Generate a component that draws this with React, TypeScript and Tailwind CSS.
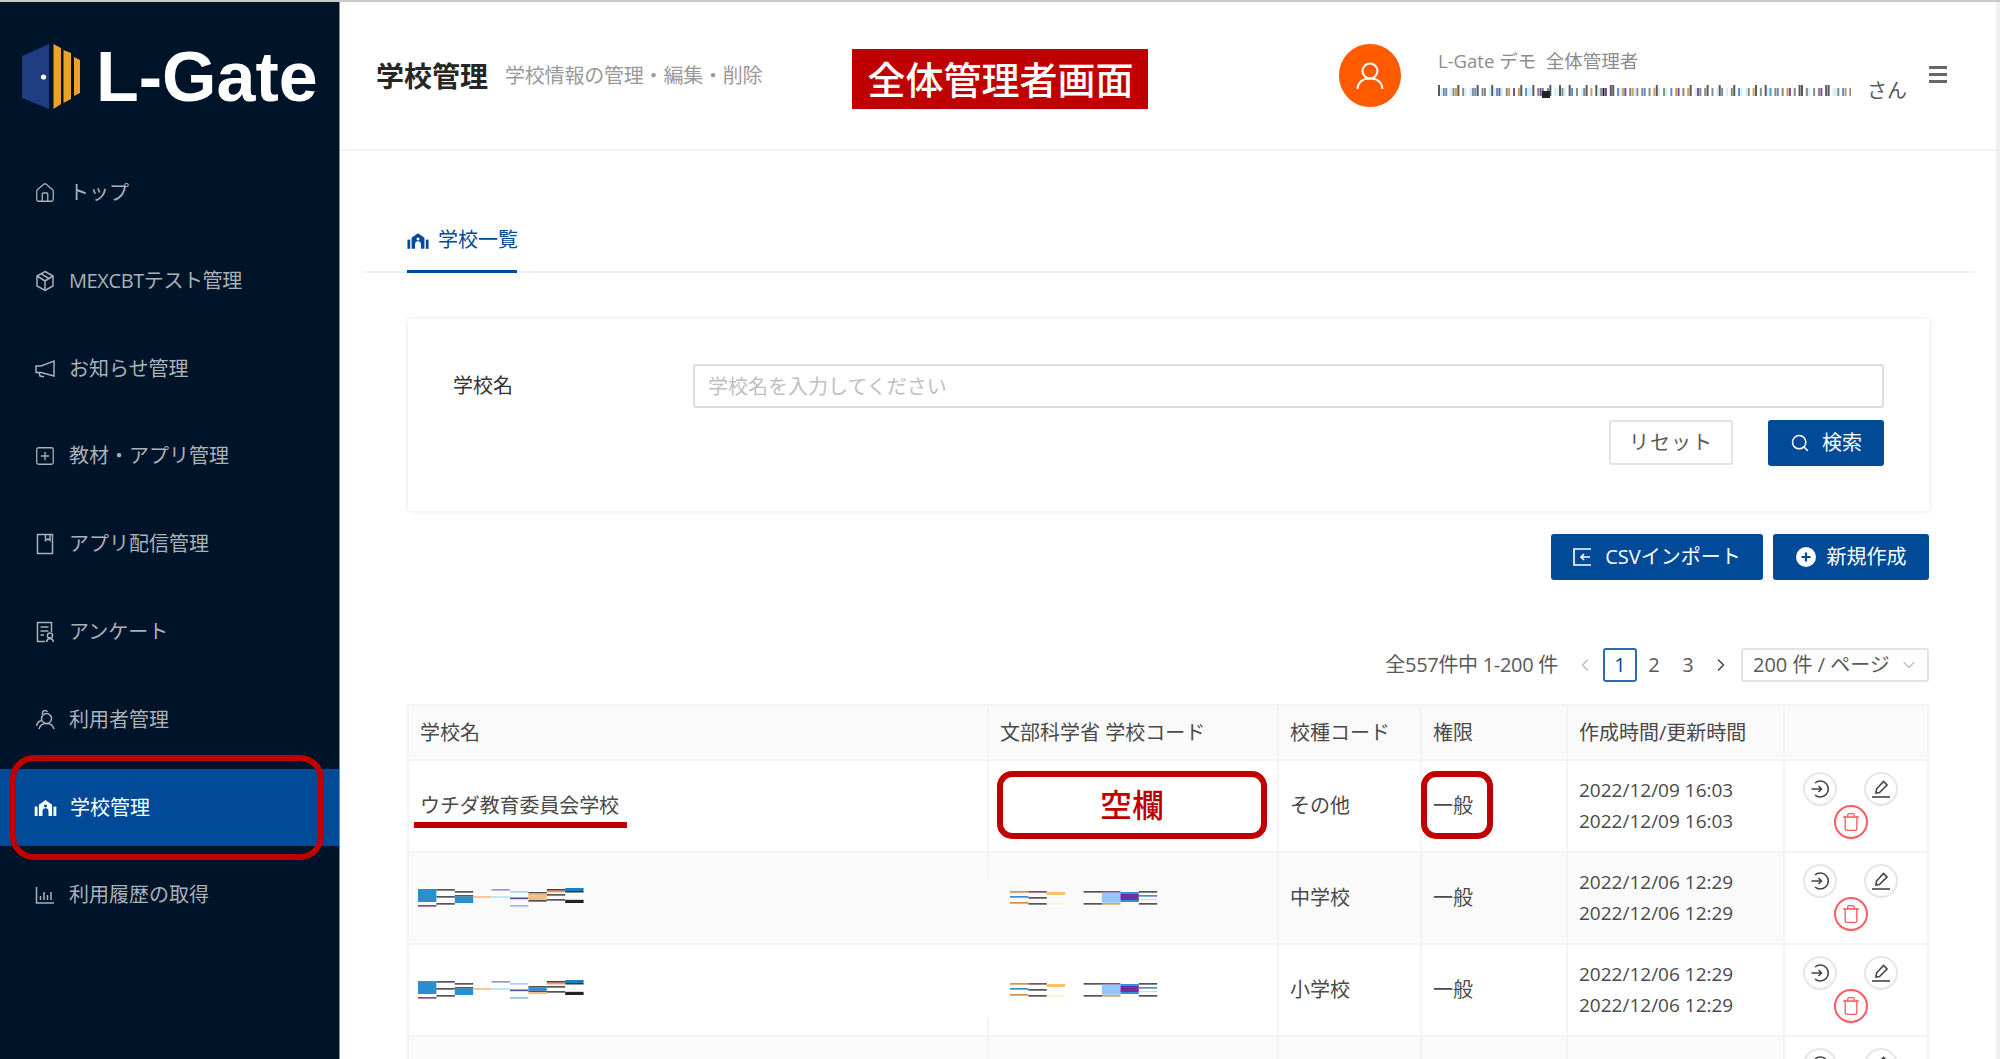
import React from 'react';
import { Home, SquarePlus, Search, Trash, ChevronLeft, ChevronRight, ChevronDown } from 'lucide-react';

type Bar = [number, number, number, string];

// mosaic smudges over private data: [column, y, height, colour]
const nameBars: Bar[] = [
  [0, 1, 13, '#2a8fcc'], [0, 17, 1.7, '#8a4a8a'],
  [1, 1, 1.7, '#555555'], [1, 8, 1.7, '#555555'], [1, 15, 1.7, '#555555'],
  [2, 3, 1.7, '#555555'], [2, 7, 1.7, '#555555'], [2, 8.5, 6.5, '#2a8fcc'],
  [3, 8, 2, '#f5c890'],
  [4, 1, 1.7, '#9a9ad0'], [4, 8, 2, '#c0e8f8'],
  [5, 3, 1.7, '#a8d4f0'], [5, 9.5, 1.7, '#5050a0'], [5, 17, 1.7, '#90c0f0'],
  [6, 4, 1.7, '#555555'], [6, 5.5, 6.5, '#f0c080'], [6, 12, 1.7, '#555555'],
  [7, 1, 1.7, '#8a2040'], [7, 2.7, 1.7, '#e8a060'], [7, 6, 1.7, '#555555'], [7, 11, 1.7, '#555555'],
  [8, 0, 3, '#1a80c0'], [8, 3, 1.5, '#333333'], [8, 12, 3, '#222222'], [8, 11, 1, '#f5d0a0'],
];

const nameBars2: Bar[] = nameBars.filter((b) => b[0] !== 6).concat([
  [6, 6, 1.7, '#555555'], [6, 7.5, 3, '#2a90d8'], [6, 10.5, 1.7, '#5040a0'], [6, 12, 2, '#f0c080'],
]);

const codeBars: Bar[] = [
  [0, 3, 1.7, '#d89040'], [0, 8, 1.7, '#3090d0'], [0, 14, 1.7, '#d89040'],
  [1, 3, 1.7, '#805060'], [1, 9, 1.7, '#555555'], [1, 15, 1.7, '#555555'],
  [2, 4, 3, '#f5c070'], [2, 15, 1.7, '#fff4c8'],
  [4, 3, 1.7, '#555555'], [4, 15, 1.7, '#555555'],
  [5, 3, 1.7, '#805080'], [5, 4.7, 10, '#90c8f8'], [5, 15, 1.7, '#e0a060'],
  [6, 4, 2, '#3090e0'], [6, 6, 6, '#7030a0'], [6, 12, 2, '#3090e0'],
  [7, 3, 1.7, '#555555'], [7, 7, 1.7, '#5090c0'], [7, 11, 1.2, '#e8e0a0'], [7, 15, 1.7, '#555555'],
];

const emailPattern =
  'hcab caoh ac cabh aa chcbpc ao p oh bcch apa bh cchac hb a cah o hcaip hh bcop aoca ab a ohc ac b op a oh cpa ah a cha c ah bc ca oh a hcb ab a op a hh ac a ap hh cca bo a ocb a';

function Mosaic({ bars, step, width }: { bars: Bar[]; step: number; width: number }) {
  return (
    <svg width={width} height={20} className="block">
      {bars.map((b, i) => (
        <rect key={i} x={b[0] * step} y={b[1]} width={step} height={b[2]} fill={b[3]} />
      ))}
    </svg>
  );
}

function EmailMosaic() {
  const colours: Record<string, string> = {
    a: '#8a8a8a', h: '#5a5a5a', b: '#5a90d8', o: '#d0a050', p: '#7a4ab0', c: '#cdf3f8', i: '#222222',
  };
  return (
    <svg width={413} height={14} className="block">
      {emailPattern.split('').map((c, i) =>
        c === ' ' ? null : (
          <rect
            key={i}
            x={i * 2.42}
            y={c === 'h' ? 1 : 4}
            width={2}
            height={c === 'h' ? 11 : 8}
            fill={colours[c]}
          />
        ),
      )}
      <rect x={104} y={7} width={8} height={7} fill="#222222" />
    </svg>
  );
}

function Logo() {
  return (
    <svg width={58} height={65} viewBox="0 0 58 65" className="shrink-0">
      <polygon points="27,0 0,12 0,54 27,65" fill="#1f3c80" />
      <circle cx={21.5} cy={33} r={2.6} fill="#ffffff" />
      <polygon points="31.5,0 39,4 39,60 31.5,65" fill="#eda328" />
      <polygon points="41.5,6 49,9 49,55 41.5,59" fill="#eda328" />
      <polygon points="52,13 58,16 58,49 52,52" fill="#eda328" />
    </svg>
  );
}

function SchoolIcon({ className }: { className?: string }) {
  return (
    <svg viewBox="0 0 24 17" className={className} fill="currentColor">
      <path
        fillRule="evenodd"
        d="M12 0 L19 5 V17 H15.2 V12 a3.2 3.2 0 0 0 -6.4 0 V17 H5 V5 Z M12 4.8 a1.6 1.6 0 1 0 0.01 0 Z"
      />
      <rect x={0.5} y={7} width={3} height={10} />
      <rect x={20.5} y={7} width={3} height={10} />
    </svg>
  );
}

const iconCls = 'w-[22px] h-[22px] shrink-0';

const navIcons: Record<string, React.ReactNode> = {
  top: <Home className={iconCls} strokeWidth={1.4} />,
  mex: (
    <svg viewBox="0 0 22 22" className={iconCls} fill="none" stroke="currentColor" strokeWidth={1.5}>
      <path d="M11 1.5 L19 6 V16 L11 20.5 L3 16 V6 Z" />
      <path d="M3 6 L11 11 L19 6 M11 11 V20.5 M7 3.8 L15 8.5" />
    </svg>
  ),
  news: (
    <svg viewBox="0 0 22 22" className={iconCls} fill="none" stroke="currentColor" strokeWidth={1.5}>
      <path d="M20 3 V18 L7 14.5 H2 V8 H7 Z" />
      <path d="M5 14.5 L6 18 L10 18.8" />
    </svg>
  ),
  app: <SquarePlus className={iconCls} strokeWidth={1.4} />,
  dist: (
    <svg viewBox="0 0 22 22" className={iconCls} fill="none" stroke="currentColor" strokeWidth={1.5}>
      <path d="M3.5 1.5 H18.5 V20.5 H3.5 Z" />
      <path d="M11.5 1.5 V7.5 L14 6 L16 7.5 V1.5" />
    </svg>
  ),
  survey: (
    <svg viewBox="0 0 22 22" className={iconCls} fill="none" stroke="currentColor" strokeWidth={1.5}>
      <path d="M11 20.5 H3.5 V1.5 H17.5 V11" />
      <path d="M6.5 6 H14.5 M6.5 10 H14.5 M6.5 14 H10" />
      <circle cx={16} cy={14.5} r={2.6} />
      <path d="M12.5 21 C13 18.5 14.5 17.5 16 17.5 C17.5 17.5 19 18.5 19.5 21" />
    </svg>
  ),
  users: (
    <svg viewBox="0 0 22 22" className={iconCls} fill="none" stroke="currentColor" strokeWidth={1.5}>
      <circle cx={12.5} cy={9.5} r={5} />
      <path d="M5 20 C6 16 9 14.5 12.5 14.5 C16 14.5 19 16 20 20" />
      <path d="M8.5 5.5 C8 3 9.5 1.5 11 1.5 C12 1.5 13 2 13.5 3 M7 11.5 C4.5 12.5 3 14.5 2.5 17" />
    </svg>
  ),
  school: <SchoolIcon className="w-[23px] h-4 shrink-0" />,
  chart: (
    <svg viewBox="0 0 22 22" className={iconCls} fill="none" stroke="currentColor" strokeWidth={1.5}>
      <path d="M2.5 3 V19 H20" />
      <path d="M6.5 16 V12 M10 16 V8 M13.5 16 V11 M17 16 V8" />
    </svg>
  ),
};

const navItems = [
  { key: 'top', label: 'トップ' },
  { key: 'mex', label: 'MEXCBTテスト管理', tight: true },
  { key: 'news', label: 'お知らせ管理' },
  { key: 'app', label: '教材・アプリ管理' },
  { key: 'dist', label: 'アプリ配信管理' },
  { key: 'survey', label: 'アンケート' },
  { key: 'users', label: '利用者管理' },
  { key: 'school', label: '学校管理', active: true },
  { key: 'chart', label: '利用履歴の取得' },
];

function Sidebar() {
  return (
    <aside className="w-[340px] shrink-0 bg-[#001429] border-r border-[#8c8c8c]">
      <div className="h-[152.5px] pl-[22px] pb-[3px] flex items-center gap-[16px]">
        <Logo />
        <span className="text-[70px] leading-none font-bold text-white [font-family:'Liberation_Sans',sans-serif]">L-Gate</span>
      </div>
      <nav className="flex flex-col gap-[10.8px]">
        {navItems.map((item) => (
          <div
            key={item.key}
            className={`relative h-[77px] pl-[34px] flex items-center gap-[13px] text-[20px] ${
              item.active ? 'bg-[#004a97] text-white' : 'text-[#a9b0b8]'
            }`}
          >
            {navIcons[item.key]}
            <span className={item.tight ? 'tracking-[-0.4px]' : ''}>{item.label}</span>
            {item.active && (
              <div className="absolute left-[10px] right-[15px] -top-[14px] -bottom-[14px] border-[6px] border-[#c00000] rounded-[24px]" />
            )}
          </div>
        ))}
      </nav>
    </aside>
  );
}

function Header() {
  return (
    <header className="h-[149px] shrink-0 border-b-2 border-[#f2f2f2] pl-[36px] pr-[49px] flex items-center">
      <h1 className="text-[28px] mt-px font-bold text-[#262626] leading-none">学校管理</h1>
      <span className="ml-[17px] text-[20px] tracking-[-0.2px] text-[#9a9a9a]">学校情報の管理・編集・削除</span>
      <div className="ml-[90px] mt-[7px] w-[296px] h-[60px] bg-[#c00000] text-white text-[38px] font-medium flex items-center justify-center">
        全体管理者画面
      </div>
      <div className="ml-auto w-[62px] h-[63px] rounded-full bg-[#ff5a00] flex items-center justify-center text-white">
        <svg width={28} height={28} viewBox="0 0 28 28" fill="none" stroke="currentColor" strokeWidth={2}>
          <circle cx={14} cy={9} r={7.5} />
          <path d="M1.5 27 C2 20 7 16.5 14 16.5 C21 16.5 26 20 26.5 27" />
        </svg>
      </div>
      <div className="ml-[37px] flex flex-col gap-[4px]">
        <div className="text-[18.5px] leading-[26px] text-[#8c8c8c]">L-Gate デモ&nbsp;&nbsp;全体管理者</div>
        <div className="flex items-center gap-[16px] h-[26px]">
          <EmailMosaic />
          <span className="text-[20px] text-[#595959]">さん</span>
        </div>
      </div>
      <div className="ml-[22px] w-[18px] flex flex-col gap-[4.5px] -mt-[2px]">
        <div className="h-[2.5px] bg-[#666666]" />
        <div className="h-[2.5px] bg-[#666666]" />
        <div className="h-[2.5px] bg-[#666666]" />
      </div>
    </header>
  );
}

function Tabs() {
  return (
    <div className="ml-[22px] mr-[21px] mt-[70px] border-b-2 border-[#f2f2f2] pl-[45px] h-[52px] flex">
      <div className="w-[110px] h-[52px] border-b-[3px] border-[#004a97] flex items-start gap-[9px] text-[20px] leading-[38px] text-[#004a97] whitespace-nowrap">
        <SchoolIcon className="w-[22px] h-4 mt-[12px] shrink-0" />
        <span>学校一覧</span>
      </div>
    </div>
  );
}

function SearchCard() {
  return (
    <section className="mt-[46px] ml-px h-[192px] bg-white shadow-[0_0_6px_rgba(0,0,0,0.1)] pt-[45px] pl-[45px] pr-[45px]">
      <div className="flex items-center h-[44px]">
        <label className="w-[240px] text-[20px] text-[#333333]">学校名</label>
        <input
          className="flex-1 h-[44px] border-2 border-[#dddddd] rounded-[3px] px-[13px] text-[20px] outline-none placeholder:text-[#bfbfbf]"
          placeholder="学校名を入力してください"
        />
      </div>
      <div className="mt-[12px] flex justify-end gap-[35px]">
        <button className="w-[124px] h-[45px] border-2 border-[#e3e3e3] rounded-[3px] text-[20px] text-[#595959] tracking-[1px]">リセット</button>
        <button className="w-[116px] h-[46px] bg-[#004a97] rounded-[3px] text-[20px] text-white flex items-center justify-center gap-[12px]">
          <Search className="w-[20px] h-[20px]" strokeWidth={1.8} />
          検索
        </button>
      </div>
    </section>
  );
}

function ActionRow() {
  return (
    <div className="mt-[23px] flex justify-end gap-[10px]">
      <button className="w-[212px] h-[46px] bg-[#004a97] rounded-[3px] text-[20px] text-white flex items-center justify-center gap-[13px]">
        <svg width={19} height={18} viewBox="0 0 19 18" fill="none" stroke="currentColor" strokeWidth={1.6}>
          <path d="M18 1 H1 V17 H18" />
          <path d="M17 9 H8 M11 6 L8 9 L11 12" />
        </svg>
        CSVインポート
      </button>
      <button className="w-[156px] h-[46px] bg-[#004a97] rounded-[3px] text-[20px] text-white flex items-center justify-center gap-[11px]">
        <svg width={20} height={20} viewBox="0 0 20 20">
          <circle cx={10} cy={10} r={10} fill="#ffffff" />
          <path d="M10 5.5 V14.5 M5.5 10 H14.5" stroke="#004a97" strokeWidth={2.2} />
        </svg>
        新規作成
      </button>
    </div>
  );
}

function Pagination() {
  return (
    <div className="mt-[68px] flex items-center justify-end h-[34px] text-[20px] text-[#595959]">
      <span className="mr-[17px] tracking-[-0.3px]">全557件中 1-200 件</span>
      <ChevronLeft className="w-[20px] h-[20px] text-[#bfbfbf]" strokeWidth={1.6} />
      <span className="ml-[8px] w-[34px] h-[34px] border-2 border-[#2b6cb0] rounded-[3px] flex items-center justify-center text-[#004a97]">1</span>
      <span className="w-[34px] text-center">2</span>
      <span className="w-[34px] text-center">3</span>
      <ChevronRight className="ml-[6px] w-[20px] h-[20px] text-[#444444]" strokeWidth={1.8} />
      <div className="ml-[10px] w-[188px] h-[34px] border-2 border-[#e3e3e3] rounded-[3px] pl-[10px] pr-[8px] flex items-center justify-between whitespace-nowrap">
        <span>200 件 / ページ</span>
        <ChevronDown className="w-[20px] h-[20px] text-[#bfbfbf]" strokeWidth={1.4} />
      </div>
    </div>
  );
}

function RowActions() {
  return (
    <div className="ml-[18px] pt-[11px] w-[95px] flex flex-wrap justify-center gap-x-[27px]">
      <button className="w-[34px] h-[34px] rounded-full border-2 border-[#e6e6e6] bg-white flex items-center justify-center text-[#444444]">
        <svg width={20} height={20} viewBox="0 0 20 20" fill="none" stroke="currentColor" strokeWidth={1.6}>
          <path d="M5 4 A8 8 0 1 1 5 16" />
          <path d="M1.5 10 H11.5 M8.5 7 L11.5 10 L8.5 13" />
        </svg>
      </button>
      <button className="w-[34px] h-[34px] rounded-full border-2 border-[#e6e6e6] bg-white flex items-center justify-center text-[#444444]">
        <svg width={20} height={20} viewBox="0 0 20 20" fill="none" stroke="currentColor" strokeWidth={1.6}>
          <path d="M5 14 L5.5 10 L12.5 2.5 L16 6 L8.5 13.5 Z" />
          <path d="M1 18 H19" />
        </svg>
      </button>
      <button className="-mt-px w-[34px] h-[34px] rounded-full border-2 border-[#ff5a5f] bg-white flex items-center justify-center text-[#ff5a5f]">
        <Trash className="w-[20px] h-[20px]" strokeWidth={1.6} />
      </button>
    </div>
  );
}

const colCls = 'grid grid-cols-[580px_290px_143px_146px_217px_144px]';
const cellCls = 'border-r-2 border-[#f4f4f4] pl-[11px] flex items-center';

interface RowData {
  name: React.ReactNode;
  code: React.ReactNode;
  kind: string;
  role: string;
  date: string;
  striped: boolean;
  cut?: 'top' | 'bottom';
  annotated?: boolean;
}

const rows: RowData[] = [
  {
    name: (
      <span className="relative tracking-[-0.1px]">
        ウチダ教育委員会学校
        <span className="absolute -left-[6px] -right-[8px] -bottom-[7px] h-[6px] bg-[#c00000]" />
      </span>
    ),
    code: null,
    kind: 'その他',
    role: '一般',
    date: '2022/12/09 16:03',
    striped: false,
    annotated: true,
  },
  {
    name: <span className="-ml-[2px]"><Mosaic bars={nameBars} step={18.4} width={170} /></span>,
    code: <Mosaic bars={codeBars} step={18.4} width={150} />,
    kind: '中学校',
    role: '一般',
    date: '2022/12/06 12:29',
    striped: true,
    cut: 'top',
  },
  {
    name: <span className="-ml-[2px]"><Mosaic bars={nameBars2} step={18.4} width={170} /></span>,
    code: <Mosaic bars={codeBars} step={18.4} width={150} />,
    kind: '小学校',
    role: '一般',
    date: '2022/12/06 12:29',
    striped: false,
    cut: 'bottom',
  },
  { name: null, code: null, kind: '', role: '', date: '', striped: true },
];

function SchoolTable() {
  const heads = ['学校名', '文部科学省 学校コード', '校種コード', '権限', '作成時間/更新時間', ''];
  return (
    <div className="mt-[23px] border-l-2 border-[#f4f4f4] text-[20px] text-[#4a4a4a]">
      <div className={`${colCls} h-[57px] bg-[#fafafa] border-y-2 border-[#f4f4f4] -mt-px`}>
        {heads.map((h, i) => (
          <div key={i} className={`${cellCls} ${i === 4 ? 'pl-[9px]' : ''}`}>{h}</div>
        ))}
      </div>
      {rows.map((r, i) => (
        <div key={i} className={`${colCls} h-[92px] border-b-2 border-[#f4f4f4] ${r.striped ? 'bg-[#fafafa]' : 'bg-white'}`}>
          <div className={`${cellCls} relative ${r.cut ? 'border-r-transparent' : ''}`}>
            {r.name}
            {r.cut === 'top' && <div className="absolute -right-[2px] top-0 w-[2px] h-[24px] bg-[#f4f4f4]" />}
            {r.cut === 'bottom' && <div className="absolute -right-[2px] bottom-0 w-[2px] h-[18px] bg-[#f4f4f4]" />}
          </div>
          <div className={`${cellCls} pl-[21px] relative`}>
            {r.code}
            {r.annotated && (
              <div className="absolute left-[8px] top-[10px] w-[270px] h-[68px] border-[6px] border-[#c00000] rounded-[15px] flex items-center justify-center text-[32px] leading-none font-medium text-[#c00000] bg-white">
                空欄
              </div>
            )}
          </div>
          <div className={cellCls}>{r.kind}</div>
          <div className={`${cellCls} relative`}>
            {r.role}
            {r.annotated && (
              <div className="absolute left-[-1px] top-[10px] w-[72px] h-[68px] border-[6px] border-[#c00000] rounded-[15px]" />
            )}
          </div>
          <div className={`${cellCls} pl-[9px] pb-[2px] flex-col !items-start justify-center gap-[7px] leading-[24px] text-[19px]`}>
            {r.date && (
              <>
                <span>{r.date}</span>
                <span>{r.date}</span>
              </>
            )}
          </div>
          <div className="border-r-2 border-[#f4f4f4] bg-white">
            <RowActions />
          </div>
        </div>
      ))}
    </div>
  );
}

export default function App() {
  return (
    <div className="w-[2000px] h-[1059px] overflow-hidden bg-white flex border-t-2 border-[#c9c9c9] [font-family:'Open_Sans','Noto_Sans_CJK_JP',sans-serif]">
      <Sidebar />
      <main className="flex-1 min-w-0 flex flex-col border-r-4 border-[#f1f1f5]">
        <Header />
        <Tabs />
        <div className="pl-[67px] pr-[67px]">
          <SearchCard />
          <ActionRow />
          <Pagination />
          <SchoolTable />
        </div>
      </main>
    </div>
  );
}
